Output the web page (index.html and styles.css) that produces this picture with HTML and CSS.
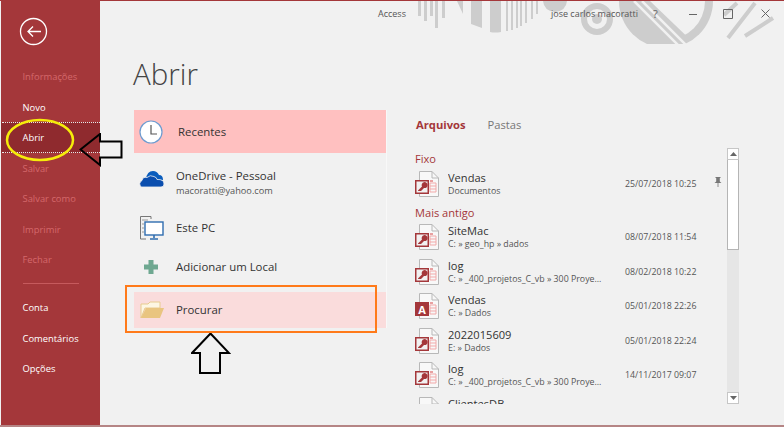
FILE: index.html
```html
<!DOCTYPE html>
<html lang="pt">
<head>
<meta charset="utf-8">
<title>Abrir</title>
<link rel="stylesheet" href="styles.css">
</head>
<body>
<div class="window">
  <aside class="side">
    <div class="back">
      <svg width="31" height="31" viewBox="0 0 31 31"><circle cx="15.5" cy="15.500" r="13" fill="none" stroke="#fff" stroke-width="1.3"/><path d="M10 15.500H23M15 10.500L10 15.500L15 20.500" fill="none" stroke="#fff" stroke-width="1.3"/></svg>
    </div>
    <nav class="nav">
      <div class="nav-item off">Informações</div>
      <div class="nav-item">Novo</div>
      <div class="nav-item current">Abrir</div>
      <div class="nav-item off">Salvar</div>
      <div class="nav-item off">Salvar como</div>
      <div class="nav-item off">Imprimir</div>
      <div class="nav-item off">Fechar</div>
      <div class="nav-sep"></div>
      <div class="nav-item">Conta</div>
      <div class="nav-item">Comentários</div>
      <div class="nav-item">Opções</div>
    </nav>
  </aside>
  <main class="main">
    <header class="titlebar">
      <svg class="pattern" width="424" height="43" viewBox="360 0 424 43" fill="#cdcdcd">
        <defs>
          <clipPath id="inner-cut"><path d="M650 0L700 48H730V0Z"/></clipPath>
        </defs>
        <rect x="418" y="0" width="3" height="15"/><rect x="424" y="0" width="3" height="20"/><rect x="430" y="0" width="3" height="15"/><rect x="435" y="0" width="3" height="27"/><rect x="442" y="0" width="3" height="17"/>
        <path d="M457 0H463V13Z"/>
        <path d="M471 0H482V27L471 23Z"/>
        <path d="M490 0H501V31Q495 32 490 31Z"/>
        <path d="M506 0h2v30h-2zM511 0h2v29h-2zM516 0h2v27h-2zM520 0h2v25h-2zM525 0h2v22h-2zM531 0h2v18h-2zM536 0h2v13h-2z"/>
        <path d="M543 0H567Q566 10 555 11Q544 10 543 0Z"/>
        <circle cx="597" cy="18" r="13" fill="none" stroke="#cdcdcd" stroke-width="6"/><circle cx="597" cy="18" r="5"/>
        <circle cx="666" cy="0" r="47"/>
        <circle cx="666" cy="0" r="39" fill="#f1f1f1" clip-path="url(#inner-cut)"/>
        <path d="M634 0L679 45M642 0L687 45" stroke="#f1f1f1" stroke-width="2.500" fill="none"/>
        <path d="M737 2L724 14M755 2L728 37M773 17L745 35" stroke="#cdcdcd" stroke-width="4" fill="none"/>
      </svg>
      <span class="app-name">Access</span>
      <span class="user">jose carlos macoratti</span>
      <span class="help">?</span>
      <span class="winbtn win-min"><svg width="10" height="10" viewBox="0 0 10 10"><path d="M0 5.500H8" stroke="#666"/></svg></span>
      <span class="winbtn win-max"><svg width="10" height="10" viewBox="0 0 10 10"><path d="M.5 .5H9.500V9.500H.5Z" fill="none" stroke="#666"/></svg></span>
      <span class="winbtn win-close"><svg width="10" height="10" viewBox="0 0 10 10"><path d="M.5 .5L8.500 8.500M8.500 .5L.5 8.500" stroke="#666"/></svg></span>
    </header>
    <h1 class="page-title">Abrir</h1>
    <div class="columns">
      <section class="places">
        <div class="place recent">
          <svg class="pic" width="26" height="26" viewBox="0 0 26 26"><circle cx="13" cy="13" r="11" fill="#fff" stroke="#6d9bd0" stroke-width="1.2"/><path d="M13 6V15H19" fill="none" stroke="#555" stroke-width="1.2"/></svg>
          <span class="place-name">Recentes</span>
        </div>
        <div class="place onedrive">
          <svg class="pic" width="26" height="18" viewBox="0 0 26 18"><path fill="#0a5dbd" d="M7 9Q8 1 14 1Q18 1 20 5Q24 5 24 10H7Z"/><path fill="#0b4eae" stroke="#f1f1f1" stroke-width=".8" d="M2 17Q-1 13 3 10.500Q4 6.500 8 7.500Q11 4.500 15 6.500Q18 7.500 18 9.500Q25 9 25 14Q25 17 22 17Z"/></svg>
          <div class="two-line">
            <span class="place-name">OneDrive - Pessoal</span>
            <span class="place-sub">macoratti@yahoo.com</span>
          </div>
        </div>
        <div class="place pc">
          <svg class="pic" width="24" height="24" viewBox="0 0 24 24"><path d="M.5 .5H11V3M.5 .5V23H6" fill="none" stroke="#777"/><path d="M2 4H8M2 8H4M2 12H4M2 16H4" stroke="#999"/><rect x="5" y="6" width="18" height="13" fill="#fff" stroke="#2f6db0" stroke-width="1.400"/><path d="M14 19V22M10 23H18" stroke="#2f6db0" stroke-width="1.600"/></svg>
          <span class="place-name">Este PC</span>
        </div>
        <div class="place add">
          <svg class="pic" width="16" height="16" viewBox="0 0 16 16"><path fill="#6fa891" d="M5.500 1H10.500V5.500H15V10.500H10.500V15H5.500V10.500H1V5.500H5.500Z"/></svg>
          <span class="place-name">Adicionar um Local</span>
        </div>
        <div class="place browse">
          <svg class="pic" width="24" height="18" viewBox="0 0 24 18"><path fill="#fdf6e3" stroke="#e8cb8f" d="M1 17V3H8L10 1H20V7H5Z"/><path fill="#e9c580" d="M1 17L6 7H24L20 17Z"/></svg>
          <span class="place-name">Procurar</span>
        </div>
      </section>
      <section class="files">
        <div class="tabs"><span class="tab active">Arquivos</span><span class="tab">Pastas</span></div>
        <div class="list-wrap">
          <div class="list">
            <div class="group">Fixo</div>
            <div class="file">
              <svg class="doc" width="24" height="26" viewBox="0 0 24 26"><use href="#db-key"/></svg>
              <div class="file-text"><span class="file-name">Vendas</span><span class="file-path">Documentos</span></div>
              <span class="file-date">25/07/2018 10:25</span>
              <svg class="pin" width="8" height="10" viewBox="0 0 8 10"><path fill="#777" d="M1.500 0H6.500V1H5.800V4.500L7.500 6H4.400V10H3.600V6H.5L2.200 4.500V1H1.500Z"/></svg>
            </div>
            <div class="group later">Mais antigo</div>
            <div class="file">
              <svg class="doc" width="24" height="26" viewBox="0 0 24 26"><use href="#db-key"/></svg>
              <div class="file-text"><span class="file-name">SiteMac</span><span class="file-path">C: » geo_hp » dados</span></div>
              <span class="file-date">08/07/2018 11:54</span>
            </div>
            <div class="file">
              <svg class="doc" width="24" height="26" viewBox="0 0 24 26"><use href="#db-key"/></svg>
              <div class="file-text"><span class="file-name">log</span><span class="file-path">C: » _400_projetos_C_vb » 300 Proye...</span></div>
              <span class="file-date">08/02/2018 10:22</span>
            </div>
            <div class="file">
              <svg class="doc" width="24" height="26" viewBox="0 0 24 26"><use href="#db-a"/></svg>
              <div class="file-text"><span class="file-name">Vendas</span><span class="file-path">C: » Dados</span></div>
              <span class="file-date">05/01/2018 22:26</span>
            </div>
            <div class="file">
              <svg class="doc" width="24" height="26" viewBox="0 0 24 26"><use href="#db-key"/></svg>
              <div class="file-text"><span class="file-name">2022015609</span><span class="file-path">E: » Dados</span></div>
              <span class="file-date">05/01/2018 22:24</span>
            </div>
            <div class="file">
              <svg class="doc" width="24" height="26" viewBox="0 0 24 26"><use href="#db-key"/></svg>
              <div class="file-text"><span class="file-name">log</span><span class="file-path">C: » _400_projetos_C_vb » 300 Proye...</span></div>
              <span class="file-date">14/11/2017 09:07</span>
            </div>
            <div class="file">
              <svg class="doc" width="24" height="26" viewBox="0 0 24 26"><use href="#db-key"/></svg>
              <div class="file-text"><span class="file-name">ClientesDB</span><span class="file-path">C: » Dados</span></div>
              <span class="file-date">30/12/2017 10:19</span>
            </div>
          </div>
          <div class="scrollbar">
            <div class="sb-btn"><svg width="7" height="4" viewBox="0 0 7 4"><path d="M3.500 0L7 4H0Z" fill="#666"/></svg></div>
            <div class="sb-thumb"></div>
            <div class="sb-track"></div>
            <div class="sb-btn"><svg width="7" height="4" viewBox="0 0 7 4"><path d="M0 0H7L3.500 4Z" fill="#666"/></svg></div>
          </div>
        </div>
      </section>
    </div>
  </main>
</div>

<svg class="defs" width="0" height="0">
  <defs>
    <g id="db-sheet">
      <path d="M4.500 .5H17L23.500 7V25.500H4.500Z" fill="#f8f8f8" stroke="#b8b8b8"/>
      <path d="M17 .5V7H23.500" fill="none" stroke="#b8b8b8"/>
      <path d="M15 9h3v2h-3z" fill="#e8a0a0"/>
      <path d="M15 12H21V21H15Z M15 15H21M15 18H21" fill="none" stroke="#f2a9a9"/>
    </g>
    <g id="db-key">
      <use href="#db-sheet"/>
      <rect x=".75" y="9.750" width="12.500" height="12.500" fill="#f1f1f1" stroke="#a4373a" stroke-width="1.500"/>
      <path d="M3 19.500L7 15.500A3 3 0 1 1 9 17L6 20H3Z" fill="#a4373a"/>
    </g>
    <g id="db-a">
      <use href="#db-sheet"/>
      <rect x="0" y="9" width="14" height="14" fill="#a4373a"/>
      <text x="7" y="20.500" text-anchor="middle" class="a-letter">A</text>
    </g>
  </defs>
</svg>

<div class="overlay-line line-top"></div>
<div class="overlay-line line-bottom"></div>
<svg class="ink ink-ellipse" width="70" height="44" viewBox="0 0 70 44"><ellipse cx="35" cy="22" rx="33" ry="20" fill="none" stroke="#f5ec0a" stroke-width="2.500"/></svg>
<svg class="ink ink-left" width="45" height="34" viewBox="0 0 45 34"><path d="M1.500 16.500L21 1V8.500H42.500V24.500H21V32Z" fill="none" stroke="#000" stroke-width="2"/></svg>
<svg class="ink ink-up" width="40" height="43" viewBox="0 0 40 43"><path d="M19.500 1.500L38 21H29V41H9V21H1Z" fill="none" stroke="#000" stroke-width="2"/></svg>
<div class="ink orange-box"></div>
</body>
</html>
```
FILE: styles.css
```css
* { box-sizing: border-box; }
html, body { margin: 0; padding: 0; }
body {
  position: relative;
  width: 784px;
  height: 427px;
  overflow: hidden;
  background: #f1f1f1;
  font-family: "Open Sans", "Noto Sans", sans-serif;
  color: #444;
}
.window {
  display: flex;
  height: 427px;
  padding-left: 1px;
  border-top: 1px solid #a4373a;
  border-bottom: 2px solid #b58585;
}
.side {
  flex: 0 0 99px;
  background: #a4373a;
  color: #fff;
  padding-top: 15px;
}
.back { height: 45px; padding-left: 17px; }
.nav { display: flex; flex-direction: column; }
.nav-item {
  height: 30.5px;
  line-height: 32px;
  padding-left: 21.500px;
  font-size: 9.400px;
  color: #fff;
}
.nav-item.off { color: #d4686b; }
.nav-item.current { background: #8f2a2e; }
.nav-sep {
  height: 1px;
  margin: 8.500px 21px 8px 22px;
  background: #c65a5d;
}
.main {
  position: relative;
  flex: 1;
  min-width: 0;
  display: flex;
  flex-direction: column;
}
.titlebar {
  position: relative;
  height: 44px;
  flex: none;
  display: flex;
  align-items: flex-start;
  padding-top: 5px;
  font-size: 9px;
  color: #555;
}
.pattern { position: absolute; left: 260px; top: 0; }
.titlebar > span { position: relative; line-height: 16px; }
.app-name { margin-left: 278px; }
.user { margin-left: 145px; }
.help { margin-left: 15px; font-size: 11px; color: #666; }
.winbtn { display: flex; height: 16px; align-items: center; }
.win-min { margin-left: 31px; }
.win-max { margin-left: 24px; }
.win-close { margin-left: 28px; }
.page-title {
  margin: 0 0 0 33px;
  height: 65px;
  font-size: 29.500px;
  font-weight: 300;
  line-height: 58px;
  color: #444;
  font-family: "Open Sans", sans-serif;
}
.columns { display: flex; flex: 1; min-height: 0; }
.places {
  flex: 0 0 253px;
  margin-left: 34px;
  height: 218px;
  display: flex;
  flex-direction: column;
  border-right: 1px solid #f8f8f8;
}
.place {
  display: flex;
  align-items: center;
  font-size: 11.400px;
  color: #333;
}
.pic { flex: none; }
.place-name { display: block; line-height: 16px; }
.place-sub { display: block; font-size: 9.200px; line-height: 13px; color: #555; }
.two-line { display: flex; flex-direction: column; }
.recent { height: 43px; background: #ffc0c0; padding-left: 4px; }
.recent .pic { margin-right: 14px; }
.onedrive { height: 52px; padding-left: 5px; padding-top: 6px; }
.onedrive .pic { margin-right: 11px; margin-top: -6px; }
.pc { height: 37px; padding-left: 6px; padding-top: 9px; }
.pc .pic { margin-right: 12px; }
.add { height: 40px; padding-left: 9px; padding-top: 10px; }
.add .pic { margin-right: 17px; }
.browse { height: 36px; margin-top: 10px; flex: none; background: #fadcdc; padding-left: 6px; }
.browse .pic { margin-right: 12px; }
.files { flex: 0 0 353px; margin-left: 28px; }
.tabs { display: flex; height: 28px; align-items: center; padding-left: 1px; font-size: 11.200px; }
.tab { margin-right: 22px; color: #777; }
.tab.active { color: #a4373a; font-weight: 700; }
.list-wrap { display: flex; height: 256px; margin-top: 10px; align-items: flex-start; }
.list { flex: 0 0 312px; height: 256px; overflow: hidden; padding-top: 3px; }
.group { height: 16px; line-height: 15px; font-size: 11.100px; color: #a4373a; }
.group.later { margin-top: 3px; height: 16px; }
.file {
  display: flex;
  align-items: center;
  height: 34.500px;
  padding-bottom: 1px;
}
.doc { flex: none; margin-right: 9px; overflow: visible; }
.file-text { flex: 0 0 177px; display: flex; flex-direction: column; white-space: nowrap; overflow: hidden; }
.file-name { font-size: 11.100px; line-height: 15px; color: #333; }
.file-path { font-size: 8.800px; line-height: 13px; color: #555; }
.file-date { flex: none; font-size: 8.800px; color: #555; }
.pin { flex: none; margin-left: 18px; margin-top: -3px; }
.scrollbar {
  flex: 0 0 12px;
  height: 256px;
  display: flex;
  flex-direction: column;
  background: #e6e6e6;
}
.sb-btn {
  flex: 0 0 12px;
  background: #fff;
  border: 1px solid #c6c6c6;
  display: flex;
  align-items: center;
  justify-content: center;
}
.sb-thumb { flex: 0 0 90px; background: #fff; border: 1px solid #b5b5b5; border-top: 0; }
.sb-track { flex: 1; }
.a-letter { font-family: "Open Sans", sans-serif; font-size: 11px; font-weight: 700; fill: #fff; }
.defs { position: absolute; }
.overlay-line { position: absolute; left: 2px; width: 98px; height: 0; border-top: 1px dotted #e8e8e8; }
.line-top { top: 122px; }
.line-bottom { top: 152px; }
.ink { position: absolute; }
.ink-ellipse { left: 4.500px; top: 118px; }
.ink-left { left: 79px; top: 133px; }
.ink-up { left: 191px; top: 332px; }
.orange-box { left: 125px; top: 285px; width: 252px; height: 48px; border: 2px solid #ff7a1a; }
```
